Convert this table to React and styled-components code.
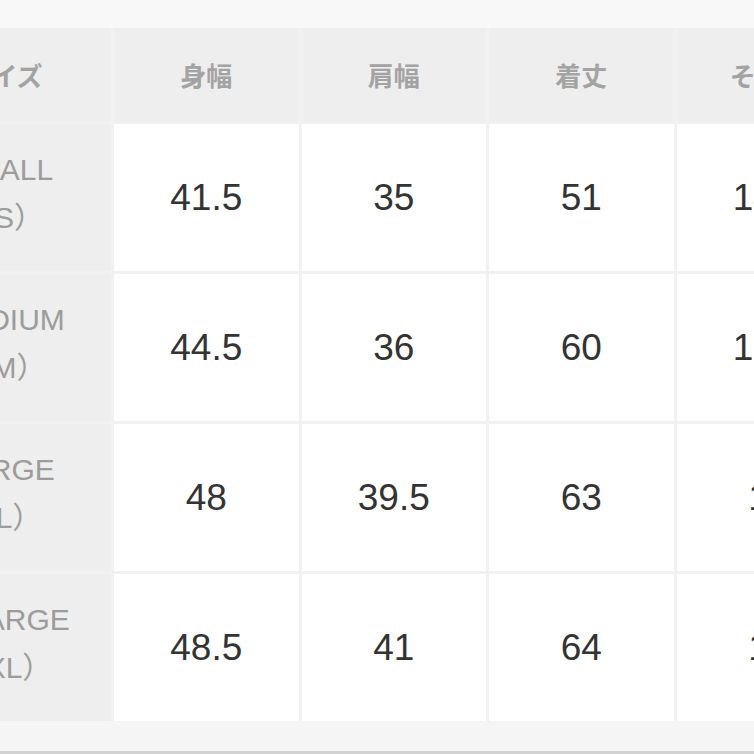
import React from "react";
import styled, { createGlobalStyle } from "styled-components";

const GlobalStyle = createGlobalStyle`
  html, body { margin: 0; padding: 0; background: #f8f8f8; }
  body { font-family: "Liberation Sans", "Noto Sans CJK JP", sans-serif; }
`;

const Frame = styled.div`
  width: 754px;
  height: 754px;
  overflow: hidden;
  display: flex;
  flex-direction: column;
  background: #f8f8f8;
`;

const TopBand = styled.div`
  height: 28px;
  flex-shrink: 0;
  background: #f8f8f8;
`;

const Table = styled.div`
  display: grid;
  grid-template-columns: 214px repeat(4, 184.5px);
  grid-template-rows: 93px repeat(4, 147px);
  gap: 3px;
  background: #f1f1f1;
  margin-left: -103px;
  width: max-content;
  flex-shrink: 0;
  align-self: flex-start;
`;

const HeadCell = styled.div`
  background: #eeeeee;
  display: flex;
  align-items: center;
  justify-content: center;
  font-family: "Noto Sans CJK JP", sans-serif;
  font-size: 26px;
  font-weight: 700;
  color: #a3a3a3;
`;

const LabelCell = styled.div`
  background: #eeeeee;
  display: flex;
  flex-direction: column;
  align-items: center;
  justify-content: center;
  padding-bottom: 8px;
  box-sizing: border-box;
  font-family: "Liberation Sans", "Noto Sans CJK JP", sans-serif;
  font-size: 30px;
  line-height: 48px;
  color: #9c9c9c;
`;

const LabelLine = styled.span`
  white-space: nowrap;
`;

const ValueCell = styled.div`
  background: #ffffff;
  display: flex;
  align-items: center;
  justify-content: center;
  font-family: "Liberation Sans", sans-serif;
  font-size: 37px;
  color: #333333;
`;

const BottomBand = styled.div`
  flex: 1;
  background: #f5f5f5;
  border-bottom: 3px solid #d2d2d2;
`;

const headers = ["サイズ", "身幅", "肩幅", "着丈", "そで丈"];

const rows = [
  { label: "SMALL", abbr: "S", values: ["41.5", "35", "51", "14.5"] },
  { label: "MEDIUM", abbr: "M", values: ["44.5", "36", "60", "15.5"] },
  { label: "LARGE", abbr: "L", values: ["48", "39.5", "63", "17"] },
  { label: "X-LARGE", abbr: "XL", values: ["48.5", "41", "64", "18"] },
];

export default function App() {
  return (
    <>
      <GlobalStyle />
      <Frame>
        <TopBand />
        <Table>
          {headers.map((h) => (
            <HeadCell key={h}>{h}</HeadCell>
          ))}
          {rows.map((r) => (
            <React.Fragment key={r.label}>
              <LabelCell>
                <LabelLine>{r.label}</LabelLine>
                <LabelLine>（{r.abbr}）</LabelLine>
              </LabelCell>
              {r.values.map((v, i) => (
                <ValueCell key={i}>{v}</ValueCell>
              ))}
            </React.Fragment>
          ))}
        </Table>
        <BottomBand />
      </Frame>
    </>
  );
}
